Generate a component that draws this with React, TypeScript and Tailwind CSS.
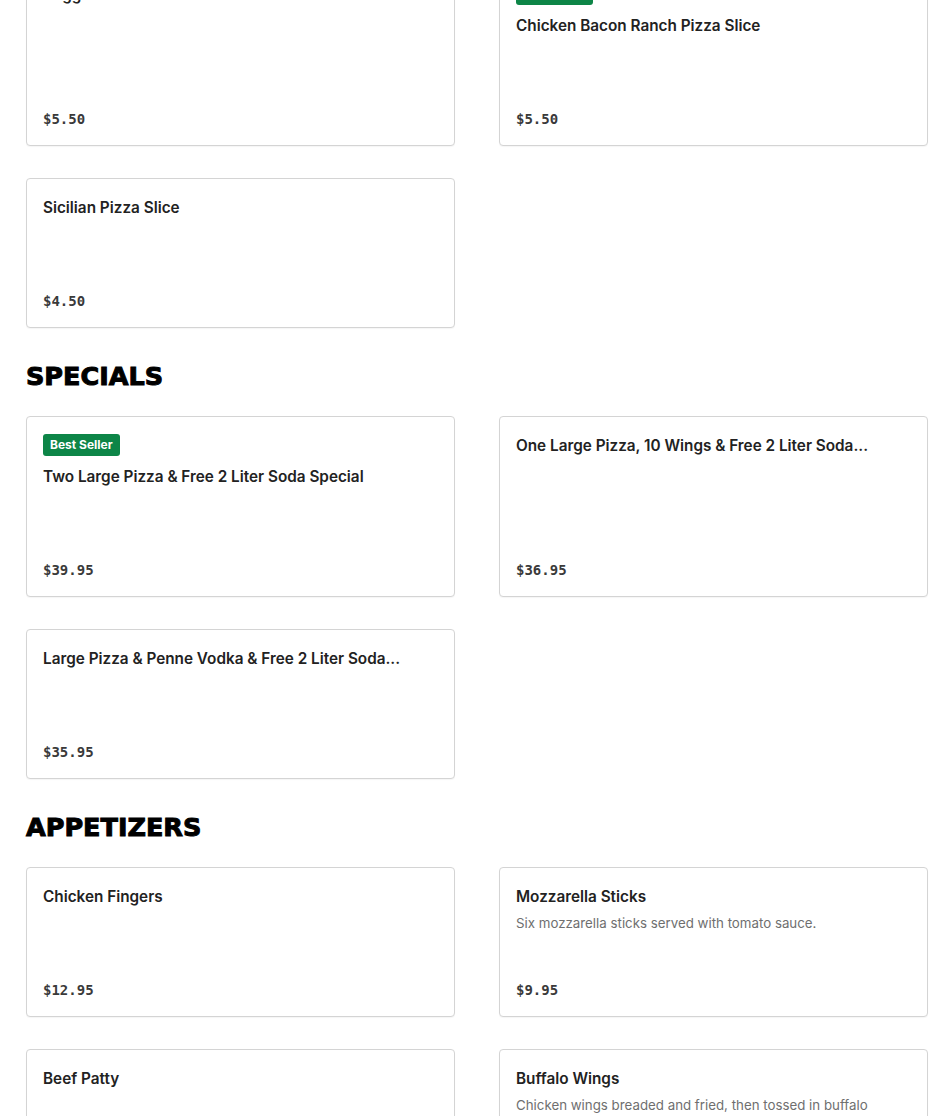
import React from "react";

type Item = {
  name: string;
  price: string;
  desc?: string;
  badge?: string;
};

const sections: { title?: string; items: Item[] }[] = [
  {
    items: [
      { name: "Veggie Pizza Slice", price: "$5.50" },
      { name: "Chicken Bacon Ranch Pizza Slice", price: "$5.50", badge: "Best Seller" },
      { name: "Sicilian Pizza Slice", price: "$4.50" },
    ],
  },
  {
    title: "SPECIALS",
    items: [
      { name: "Two Large Pizza & Free 2 Liter Soda Special", price: "$39.95", badge: "Best Seller" },
      { name: "One Large Pizza, 10 Wings & Free 2 Liter Soda Special", price: "$36.95" },
      { name: "Large Pizza & Penne Vodka & Free 2 Liter Soda Special", price: "$35.95" },
    ],
  },
  {
    title: "APPETIZERS",
    items: [
      { name: "Chicken Fingers", price: "$12.95" },
      { name: "Mozzarella Sticks", price: "$9.95", desc: "Six mozzarella sticks served with tomato sauce." },
      { name: "Beef Patty", price: "$3.50" },
      {
        name: "Buffalo Wings",
        price: "$14.95",
        desc: "Chicken wings breaded and fried, then tossed in buffalo sauce. Served with blue cheese.",
      },
    ],
  },
];

// names longer than 45 chars get cut off with "..."
const shorten = (name: string) =>
  name.length > 45 ? name.slice(0, 45).trimEnd() + "..." : name;

function MenuCard({ item }: { item: Item }) {
  return (
    <div className="flex flex-col rounded-[4px] border border-[#d4d4d4] bg-white px-4 pt-[17px] pb-[14px] shadow-[0_1px_1px_rgba(0,0,0,0.04)]">
      {item.badge && (
        <span className="mb-[9px] flex h-[22px] w-fit items-center rounded-[3px] bg-[#0d8547] px-[7px] text-[12px] font-bold text-white">
          {item.badge}
        </span>
      )}
      <h3 className="truncate text-[15.3px] leading-6 font-semibold text-[#222]">{shorten(item.name)}</h3>
      <div className="h-[69px] pt-[4px]">
        {item.desc && (
          <p className="line-clamp-2 text-[13.3px] leading-5 text-[#6f6f6f]">{item.desc}</p>
        )}
      </div>
      <p className="mt-auto font-['DejaVu_Sans_Mono',monospace] text-[14px] leading-6 font-bold text-[#3a3a3a]">
        {item.price}
      </p>
    </div>
  );
}

export default function App() {
  return (
    <div className="h-[1116px] overflow-hidden bg-white font-['Inter',sans-serif]">
      <div className="-mt-[35px] pl-[26px] pr-[22px]">
        {sections.map((section, i) => (
          <section key={i} className={i === 0 ? "" : "mt-[32px]"}>
            {section.title && (
              <h2 className="mb-[24px] font-['DejaVu_Sans',sans-serif] text-[25.5px] leading-8 font-bold text-black [-webkit-text-stroke:1px_black]">
                {section.title}
              </h2>
            )}
            <div className="grid grid-cols-2 gap-x-[44px] gap-y-[32px]">
              {section.items.map((item) => (
                <MenuCard key={item.name} item={item} />
              ))}
            </div>
          </section>
        ))}
      </div>
    </div>
  );
}
